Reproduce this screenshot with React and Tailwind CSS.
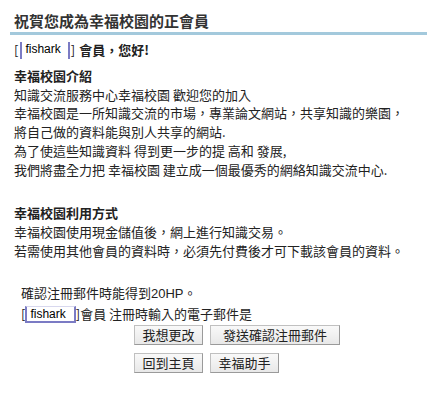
import React from 'react';

const font = { fontFamily: '"Noto Sans CJK TC", "Noto Sans CJK SC", sans-serif' };

const NameBox = ({ bottom }) => (
  <span
    className={`inline-block h-[17px] border-x-2 border-[#7b7bc4] pl-[3px] align-middle text-[12px] leading-[15px] text-black font-normal font-['Liberation_Sans',sans-serif] ${
      bottom ? 'pr-[8px] border-b-2 border-t border-t-[#d8d8ee]' : 'pr-[7px]'
    }`}
  >
    fishark
  </span>
);

const Button = ({ children, width }) => (
  <button
    className={`h-[20px] ${width} border border-[#c0c0c0] border-r-[#9a9a9a] border-b-[#9a9a9a] bg-gradient-to-b from-[#f9f9f9] to-[#e8e8e8] text-[13px] leading-[18px] text-[#222]`}
  >
    {children}
  </button>
);

export default function App() {
  return (
    <div className="w-[427px] h-[403px] bg-white text-[#222]" style={font}>
      <div className="pl-[14px] pt-[10px] text-[15px] leading-[22px] font-bold text-[#333]">
        祝賀您成為幸福校園的正會員
      </div>
      <div className="ml-[10px] h-[3px] bg-[#a3c9dc]" />

      <div className="px-[14px] pt-[5px] text-[13px] leading-[18.7px] whitespace-nowrap">
        <div className="flex items-center h-[20px] font-bold">
          <span className="font-normal">[</span>
          <span className="ml-[2px]">
            <NameBox />
          </span>
          <span className="font-normal ml-[1px]">]</span>
          <span className="ml-[4px]">會員，您好!</span>
        </div>

        <div className="mt-[7px] font-bold">幸福校園介紹</div>
        <div>知識交流服務中心幸福校園 歡迎您的加入</div>
        <div>幸福校園是一所知識交流的市場，專業論文網站，共享知識的樂園，</div>
        <div>將自己做的資料能與別人共享的網站.</div>
        <div>為了使這些知識資料 得到更一步的提 高和 發展,</div>
        <div>我們將盡全力把 幸福校園 建立成一個最優秀的網絡知識交流中心.</div>

        <div className="mt-[25px] font-bold">幸福校園利用方式</div>
        <div>幸福校園使用現金儲值後，網上進行知識交易。</div>
        <div>若需使用其他會員的資料時，必須先付費後才可下載該會員的資料。</div>

        <div className="mt-[24px] pl-[7px]">
          確認注冊郵件時能得到<span className="font-['Liberation_Sans',sans-serif]">20HP</span>。
        </div>
        <div className="flex items-center pl-[7px] h-[20px]">
          <span>[</span>
          <NameBox bottom />
          <span>]會員 注冊時輸入的電子郵件是</span>
        </div>

        <div className="pl-[120px] pt-[1px] flex flex-col gap-[8px]">
          <div className="flex gap-[7px]">
            <Button width="w-[69px]">我想更改</Button>
            <Button width="w-[130px]">發送確認注冊郵件</Button>
          </div>
          <div className="flex gap-[7px]">
            <Button width="w-[69px]">回到主頁</Button>
            <Button width="w-[69px]">幸福助手</Button>
          </div>
        </div>
      </div>
    </div>
  );
}
